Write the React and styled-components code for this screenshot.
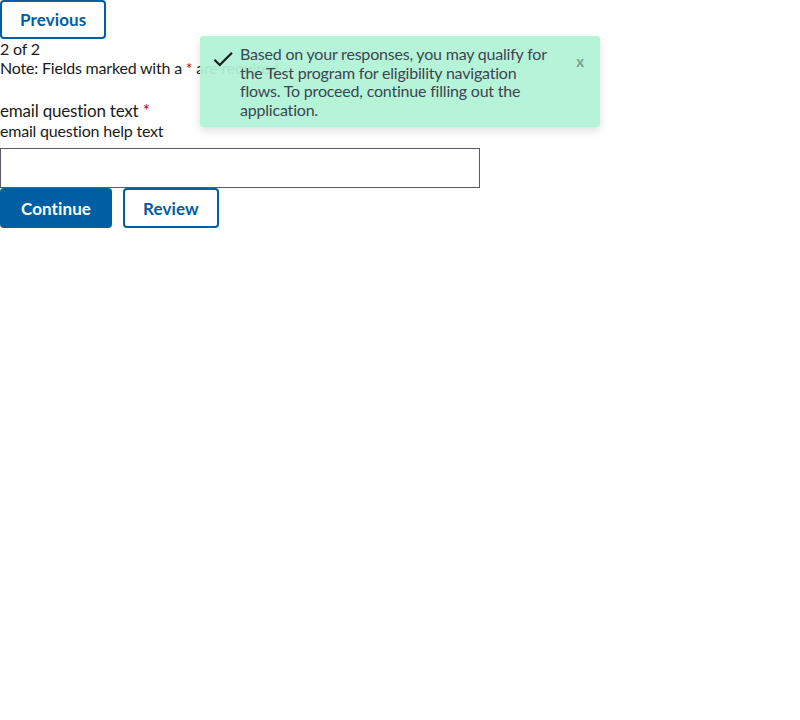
import styled, { createGlobalStyle } from "styled-components";

const GlobalStyle = createGlobalStyle`
  body {
    margin: 0;
    font-family: "Source Sans Pro", Lato, "Liberation Sans", sans-serif;
    font-size: 16px;
    letter-spacing: -0.2px;
    line-height: 1.15;
    color: #1b1b1b;
    background: #fff;
  }
`;

const Page = styled.main`
  position: relative;
  width: 800px;
  height: 720px;
`;

const Button = styled.button`
  font-family: inherit;
  font-size: 17px;
  font-weight: 700;
  letter-spacing: 0.1px;
  line-height: 1;
  height: ${(p) => (p.$outline ? "39px" : "40px")};
  padding: ${(p) => (p.$outline ? "0 18px" : "0 21px")};
  border-radius: 4px;
  cursor: pointer;
  color: ${(p) => (p.$outline ? "#005ea2" : "#fff")};
  background: ${(p) => (p.$outline ? "#fff" : "#005ea2")};
  border: ${(p) => (p.$outline ? "2px solid #005ea2" : "none")};
`;

const Step = styled.div`
  line-height: 19px;
`;

const Note = styled.p`
  margin: 0 0 23px;
  line-height: 19px;
`;

const Required = styled.span`
  color: #b50909;
`;

const Label = styled.label`
  display: block;
  font-size: 17px;
  line-height: 21px;
`;

const Help = styled.div`
  line-height: 20px;
  margin-bottom: 7px;
`;

const Input = styled.input`
  display: block;
  box-sizing: border-box;
  width: 480px;
  height: 40px;
  margin: 0;
  border: 1px solid #565c65;
  border-radius: 0;
  font: inherit;
`;

const Actions = styled.div`
  display: flex;
  gap: 11px;
  ${Button} {
    height: 40px;
  }
`;

const Toast = styled.div`
  position: absolute;
  left: 200px;
  top: 36px;
  width: 400px;
  box-sizing: border-box;
  display: flex;
  align-items: flex-start;
  padding: 9px 16px 8px 10px;
  background: rgba(176, 243, 214, 0.93);
  border-radius: 3px;
  box-shadow: 0 4px 10px rgba(0, 0, 0, 0.12);
  color: #3d4551;
`;

const CheckIcon = styled.svg`
  flex: none;
  width: 26px;
  height: 26px;
  margin-top: 1px;
  margin-right: 4px;
`;

const Message = styled.div`
  flex: 1;
  line-height: 18.5px;
  padding-right: 16px;
`;

const Close = styled.button`
  border: none;
  background: none;
  padding: 0;
  margin-top: 7px;
  font-family: inherit;
  font-size: 15px;
  font-weight: 700;
  color: #7f9f92;
  cursor: pointer;
`;

export default function App() {
  return (
    <Page>
      <GlobalStyle />
      <Button $outline>Previous</Button>
      <Step>2 of 2</Step>
      <Note>
        Note: Fields marked with a <Required>*</Required> are required.
      </Note>
      <Label htmlFor="email">
        email question text <Required>*</Required>
      </Label>
      <Help>email question help text</Help>
      <Input id="email" type="email" />
      <Actions>
        <Button>Continue</Button>
        <Button $outline>Review</Button>
      </Actions>
      <Toast role="status">
        <CheckIcon viewBox="0 0 24 24" aria-hidden="true">
          <path
            d="M9 16.2 4.8 12l-1.4 1.4L9 19 21 7l-1.4-1.4L9 16.2z"
            fill="#1b1b1b"
          />
        </CheckIcon>
        <Message>
          Based on your responses, you may qualify for the Test program for
          eligibility navigation flows. To proceed, continue filling out the
          application.
        </Message>
        <Close aria-label="close">x</Close>
      </Toast>
    </Page>
  );
}
